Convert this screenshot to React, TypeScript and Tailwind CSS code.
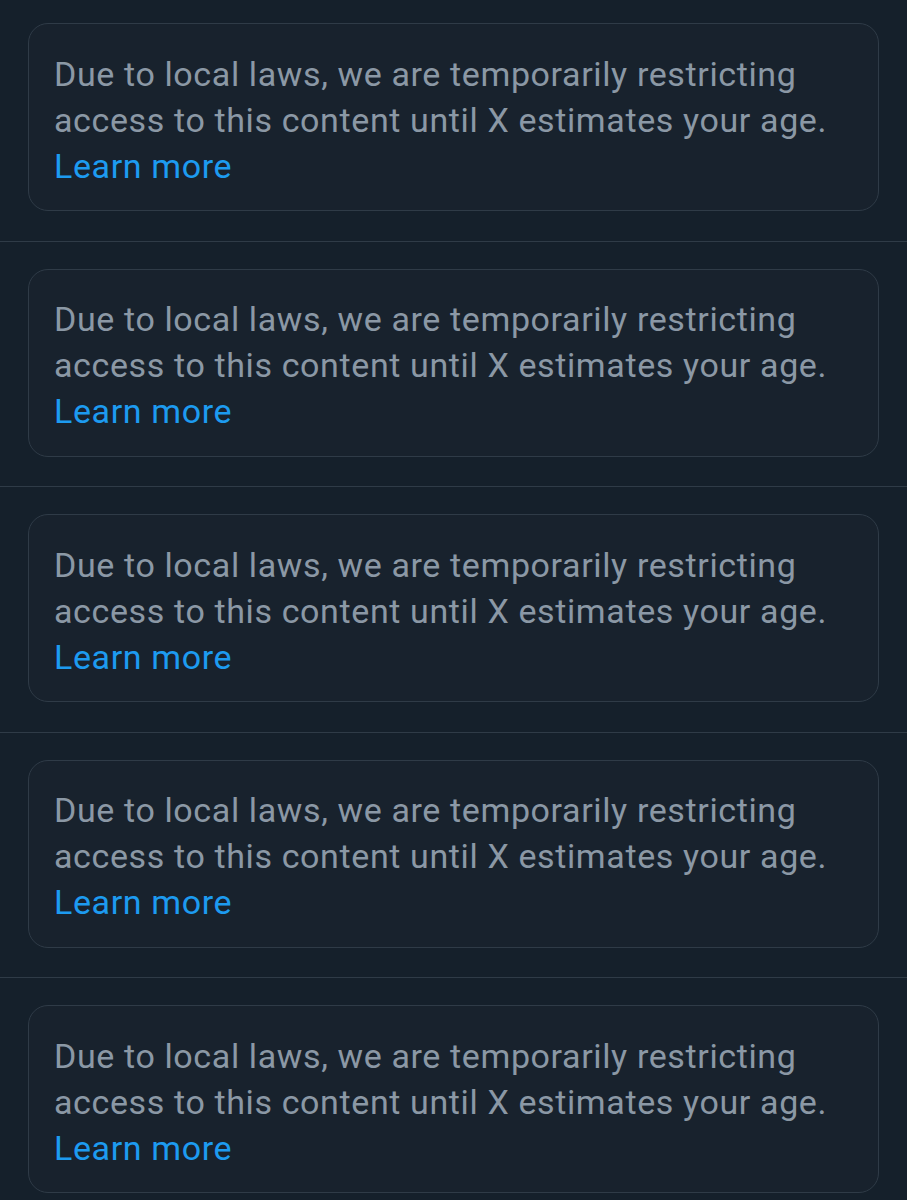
import React from "react";

function Notice({ first }: { first?: boolean }) {
  return (
    <div className={(first ? "pt-[23px]" : "pt-[27px]") + " px-[28px] pb-[29.5px] border-b border-[#2f3b47]"}>
      <div className="rounded-[20px] border border-[#2f3b47] bg-[#18222d] pl-[25px] pr-[20px] pt-[26.5px] h-[188px]">
        <p className="text-[34px] leading-[46px] text-[#8b98a5] tracking-[0.62px]" style={{ fontFamily: "Roboto, 'Noto Sans', sans-serif" }}>
          <span className="block whitespace-nowrap">Due to local laws, we are temporarily restricting</span>
          <span className="block whitespace-nowrap">access to this content until X estimates your age.</span>
          <span className="block whitespace-nowrap text-[#1d9bf0]">Learn more</span>
        </p>
      </div>
    </div>
  );
}

export default function App() {
  return (
    <div className="min-h-[1200px] w-[907px] bg-[#15202b] overflow-hidden">
      <Notice first />
      <Notice />
      <Notice />
      <Notice />
      <Notice />
    </div>
  );
}
